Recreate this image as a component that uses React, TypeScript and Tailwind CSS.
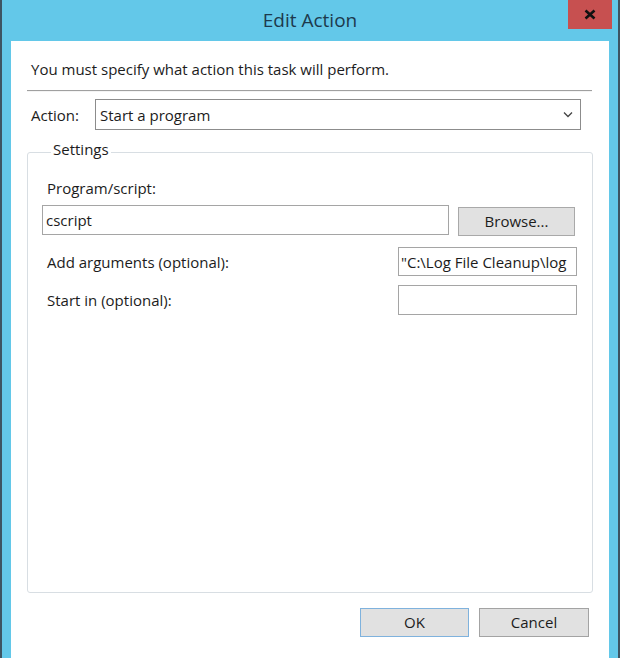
export default function App() {
  return (
    <div className="flex h-[658px] w-[620px] flex-col overflow-hidden border-x-2 border-[#3d5563] bg-[#63c8e9] font-['Open_Sans',sans-serif] text-[15px] text-[#1c1c1c]">
      <div className="relative flex h-[41px] shrink-0 items-center justify-center">
        <span className="text-[19px] text-[#1d3a4d]">Edit Action</span>
        <div className="absolute right-[6px] top-0 flex h-[29px] w-[44px] items-center justify-center bg-[#c75050]">
          <svg width="12" height="11" viewBox="0 0 12 11">
            <path d="M1.5 1.5 L10.5 9.5 M10.5 1.5 L1.5 9.5" stroke="#111" strokeWidth="2.6" />
          </svg>
        </div>
      </div>

      <div className="mx-[9px] flex flex-1 flex-col bg-white">
        <p className="ml-[20px] mt-[18px] leading-[20px]">You must specify what action this task will perform.</p>
        <div className="ml-[16px] mr-[17px] mt-[11px] border-t border-b border-t-[#a0a0a0] border-b-[#f4f4f4]" />

        <div className="mt-[7px] flex items-center">
          <span className="ml-[20px] w-[64px] leading-[20px]">Action:</span>
          <div className="flex h-[31px] w-[486px] items-center justify-between border border-[#8c8c8c] pl-[4px] pr-[7px]">
            <span className="leading-[20px]">Start a program</span>
            <svg width="10" height="7" viewBox="0 0 10 7">
              <path d="M1 1.5 L5 5.5 L9 1.5" fill="none" stroke="#444" strokeWidth="1.3" />
            </svg>
          </div>
        </div>

        <fieldset className="ml-[16px] mr-[16px] mt-[9px] h-[454px] rounded-[3px] border border-[#d8dee3] px-[14px]">
          <legend className="ml-[9px] px-[2px] pb-[6px] leading-[20px]">Settings</legend>

          <p className="mt-[13px] pl-[5px] leading-[20px]">Program/script:</p>
          <div className="mt-[7px] flex items-start">
            <div className="flex h-[30px] w-[407px] items-center border border-[#a5a5a5] pl-[3px]">
              <span className="leading-[20px]">cscript</span>
            </div>
            <div className="ml-[9px] mt-[2px] flex h-[29px] w-[117px] items-center justify-center border border-[#a9a9a9] bg-[#e1e1e1]">
              Browse...
            </div>
          </div>

          <div className="mt-[11px] flex items-center justify-between">
            <span className="pl-[5px] leading-[20px]">Add arguments (optional):</span>
            <div className="mr-[1px] flex h-[29px] w-[179px] items-center overflow-hidden whitespace-nowrap border border-[#a5a5a5] pl-[2px]">
              <span className="leading-[20px]">"C:\Log File Cleanup\log</span>
            </div>
          </div>

          <div className="mt-[9px] flex items-center justify-between">
            <span className="pl-[5px] leading-[20px]">Start in (optional):</span>
            <div className="mr-[1px] h-[30px] w-[179px] border border-[#a5a5a5]" />
          </div>
        </fieldset>

        <div className="mr-[20px] mt-[15px] flex justify-end gap-[10px]">
          <div className="flex h-[29px] w-[109px] items-center justify-center border border-[#7fb2dd] bg-[#e1e1e1]">OK</div>
          <div className="flex h-[29px] w-[110px] items-center justify-center border border-[#a3a3a3] bg-[#e1e1e1]">Cancel</div>
        </div>
      </div>
    </div>
  );
}
